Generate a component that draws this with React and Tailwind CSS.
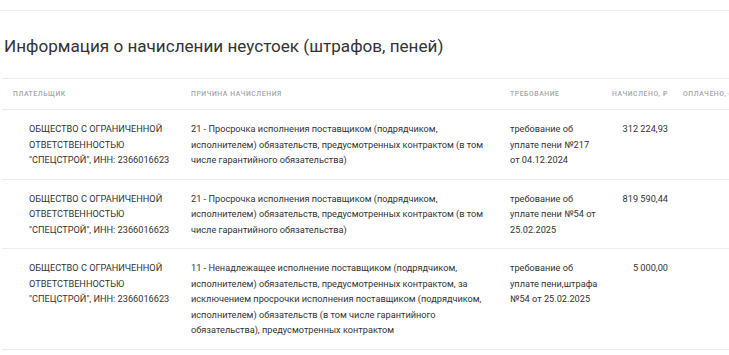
const ROWS = [
  {
    payer: 'ОБЩЕСТВО С ОГРАНИЧЕННОЙ ОТВЕТСТВЕННОСТЬЮ "СПЕЦСТРОЙ", ИНН: 2366016623',
    reason:
      '21 - Просрочка исполнения поставщиком (подрядчиком, исполнителем) обязательств, предусмотренных контрактом (в том числе гарантийного обязательства)',
    demand: 'требование об уплате пени №217 от 04.12.2024',
    accrued: '312 224,93',
  },
  {
    payer: 'ОБЩЕСТВО С ОГРАНИЧЕННОЙ ОТВЕТСТВЕННОСТЬЮ "СПЕЦСТРОЙ", ИНН: 2366016623',
    reason:
      '21 - Просрочка исполнения поставщиком (подрядчиком, исполнителем) обязательств, предусмотренных контрактом (в том числе гарантийного обязательства)',
    demand: 'требование об уплате пени №54 от 25.02.2025',
    accrued: '819 590,44',
  },
  {
    payer: 'ОБЩЕСТВО С ОГРАНИЧЕННОЙ ОТВЕТСТВЕННОСТЬЮ "СПЕЦСТРОЙ", ИНН: 2366016623',
    reason:
      '11 - Ненадлежащее исполнение поставщиком (подрядчиком, исполнителем) обязательств, предусмотренных контрактом, за исключением просрочки исполнения поставщиком (подрядчиком, исполнителем) обязательств (в том числе гарантийного обязательства), предусмотренных контрактом',
    demand: 'требование об уплате пени,штрафа №54 от 25.02.2025',
    accrued: '5 000,00',
  },
];

const th = 'text-left align-middle font-medium uppercase text-[6.8px] tracking-[0.6px] text-[#a3a6ab] h-[31px] p-0';
const td = 'align-top py-[11px] text-[9.2px] leading-[15.5px] text-[#333]';

export default function App() {
  return (
    <div className="w-[729px] h-[355px] overflow-hidden bg-white font-['Roboto',sans-serif]">
      <div className="h-[10px]" />
      <div className="border-t border-[#efefef]" />

      {/* Title */}
      <h2 className="mt-[21px] pl-[4px] text-[17.1px] leading-[28px] font-normal text-[#333] whitespace-nowrap">
        Информация о начислении неустоек (штрафов, пеней)
      </h2>

      {/* Table */}
      <div className="mt-[18px] ml-[2px] w-[820px]">
        <table className="table-fixed border-collapse w-[820px]">
          <colgroup>
            <col className="w-[178px]" />
            <col className="w-[319px]" />
            <col className="w-[101px]" />
            <col className="w-[79px]" />
            <col className="w-[143px]" />
          </colgroup>
          <thead>
            <tr className="border-t border-b border-[#ececec]">
              <th className={`${th} pl-[11px]`}>Плательщик</th>
              <th className={`${th} pl-[11px]`}>Причина начисления</th>
              <th className={`${th} pl-[11px]`}>Требование</th>
              <th className={`${th} !text-right pr-[11px]`}>Начислено, ₽</th>
              <th className={`${th} pl-[4px] whitespace-nowrap`}>Оплачено, ₽</th>
            </tr>
          </thead>
          <tbody>
            {ROWS.map((r, i) => (
              <tr key={i} className="border-b border-[#ececec]">
                <td className={`${td} pl-[27px] pr-[10px]`}>{r.payer}</td>
                <td className={`${td} pl-[11px] pr-[4px]`}>{r.reason}</td>
                <td className={`${td} pl-[11px] pr-0`}>{r.demand}</td>
                <td className={`${td} text-right pr-[11px]`}>{r.accrued}</td>
                <td className={`${td} pl-[4px]`} />
              </tr>
            ))}
          </tbody>
        </table>
      </div>
    </div>
  );
}
